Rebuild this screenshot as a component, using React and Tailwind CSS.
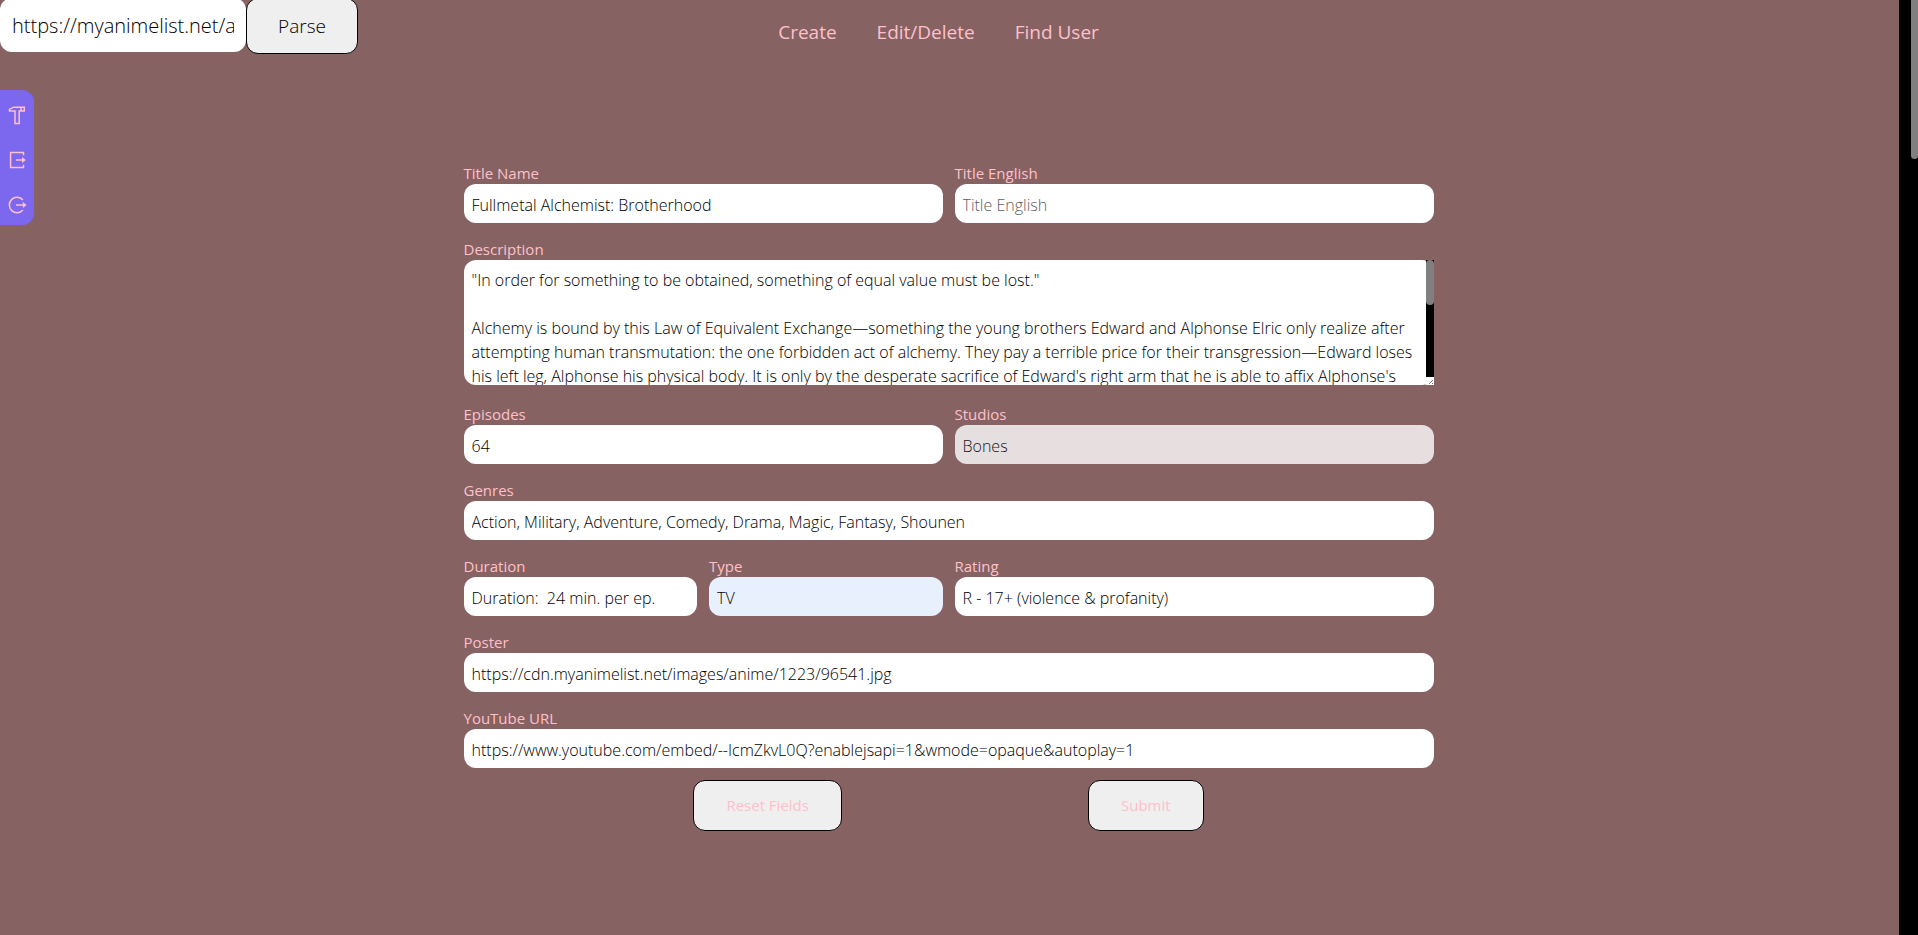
import React from "react";

const DESCRIPTION = `"In order for something to be obtained, something of equal value must be lost."

Alchemy is bound by this Law of Equivalent Exchange—something the young brothers Edward and Alphonse Elric only realize after attempting human transmutation: the one forbidden act of alchemy. They pay a terrible price for their transgression—Edward loses his left leg, Alphonse his physical body. It is only by the desperate sacrifice of Edward's right arm that he is able to affix Alphonse's soul to a suit of armor. Devastated and alone, it is the hope that they would both eventually return to their original bodies that gives Edward the inspiration to obtain metal limbs called "automail" and become a state alchemist, the Fullmetal Alchemist.

Three years later, the brothers seek the Philosopher's Stone, a mythical relic that allows an alchemist to overcome the Law of Equivalent Exchange. Even with military allies on their side, they find themselves caught up in a nationwide conspiracy that leads them to the true nature of the stone and to the dark history of their country.`;

const LINKS = ["Create", "Edit/Delete", "Find User"];

const FIELD =
  "block w-full rounded-xl px-2 text-base font-light text-black placeholder:text-[#606060] outline-none";

function Icon({ children }) {
  return (
    <svg viewBox="0 0 20 20" className="size-5" fill="none" stroke="currentColor" strokeWidth="1.5" aria-hidden="true">
      {children}
    </svg>
  );
}

function HammerIcon() {
  return (
    <Icon>
      <path d="M2.5 6 V4.4 L6.5 2.2 H17.3 V6 H12.2 V18.4 H8 V6 Z" />
      <path d="M14 2.2 V6" />
    </Icon>
  );
}

function ExportIcon() {
  return (
    <Icon>
      <path d="M16.5 5.2 V2.4 H3.6 V17.6 H16.5 V14.8" />
      <path d="M9 10 H16" />
      <path d="M15 7 L18.8 10 L15 13 Z" fill="currentColor" stroke="none" />
    </Icon>
  );
}

function LogoutIcon() {
  return (
    <Icon>
      <path d="M15.9 5 A7.7 7.7 0 1 0 15.9 15" />
      <path d="M9 10 H17" />
      <path d="M15.8 7 L19.6 10 L15.8 13 Z" fill="currentColor" stroke="none" />
    </Icon>
  );
}

const TOOLS = [
  ["Build", HammerIcon],
  ["Export", ExportIcon],
  ["Log out", LogoutIcon],
];

function Field({ id, label, span, tone = "bg-white", ...rest }) {
  return (
    <div className={span}>
      <label htmlFor={id} className="block pt-[2px] leading-[22px]">{label}</label>
      <input id={id} type="text" className={`${FIELD} ${tone} h-[39px] pt-[3px]`} {...rest} />
    </div>
  );
}

export default function App() {
  return (
    <div className="flex min-h-screen bg-black font-['Open_Sans',sans-serif] text-[15px] text-[#ffc0cb]">
      <div className="min-w-0 flex-1 bg-[#866262]">
        <header className="grid h-[54px] grid-cols-[1fr_auto_1fr] items-start overflow-hidden pr-[22px] text-[19px]">
          <form className="flex items-start font-light" onSubmit={(e) => e.preventDefault()}>
            <input
              type="text"
              aria-label="Page address"
              defaultValue="https://myanimelist.net/a"
              className="-mt-[2px] h-[54px] w-[246px] rounded-xl bg-white px-3 text-xl text-black outline-none"
            />
            <button type="submit" className="-mt-[2px] h-14 w-[112px] rounded-xl border border-black bg-[#efefef] text-black">
              Parse
            </button>
          </form>
          <nav className="flex gap-10 pt-[18px] leading-7">
            {LINKS.map((text) => (
              <a key={text} href="#">{text}</a>
            ))}
          </nav>
        </header>

        <div className="grid grid-cols-[34px_1fr_36px] items-start">
          <aside className="mt-9 flex flex-col rounded-r-xl bg-[#7b68ee]">
            {TOOLS.map(([name, Glyph]) => (
              <button key={name} type="button" aria-label={name} className="flex h-[45px] items-center justify-center pt-1">
                <Glyph />
              </button>
            ))}
          </aside>

          <main className="mx-auto w-full max-w-[970px] pt-[106px] pb-8">
            <form onSubmit={(e) => e.preventDefault()}>
              <div className="grid grid-cols-4 gap-x-3 gap-y-[13px]">
                <Field id="name" label="Title Name" span="col-span-2" defaultValue="Fullmetal Alchemist: Brotherhood" />
                <Field id="english" label="Title English" span="col-span-2" placeholder="Title English" />
                <div className="col-span-4 pb-[3px]">
                  <label htmlFor="description" className="block pt-[2px] leading-[22px]">Description</label>
                  <div className="relative">
                    <textarea
                      id="description"
                      defaultValue={DESCRIPTION}
                      className={`${FIELD} h-[125px] resize-none overflow-y-scroll bg-white pt-2 pr-4 leading-6 [scrollbar-width:none]`}
                    />
                    <div className="absolute inset-y-0 right-0 flex w-2 flex-col bg-black" aria-hidden="true">
                      <div className="h-[45px] rounded bg-[#808080]" />
                      <svg viewBox="0 0 8 8" className="mt-auto size-2 bg-white" stroke="#808080" fill="none">
                        <path d="M3 7 L7 3 M6 7 L7 6" />
                      </svg>
                    </div>
                  </div>
                </div>
                <Field id="episodes" label="Episodes" span="col-span-2" defaultValue="64" />
                <Field id="studios" label="Studios" span="col-span-2" tone="bg-white opacity-80" defaultValue="Bones" />
                <Field id="genres" label="Genres" span="col-span-4" defaultValue="Action, Military, Adventure, Comedy, Drama, Magic, Fantasy, Shounen" />
                <Field id="duration" label="Duration" span="col-span-1" defaultValue="Duration:  24 min. per ep." />
                <Field id="type" label="Type" span="col-span-1" tone="bg-[#e8f0fe]" defaultValue="TV" />
                <Field id="rating" label="Rating" span="col-span-2" defaultValue="R - 17+ (violence & profanity)" />
                <Field id="poster" label="Poster" span="col-span-4" defaultValue="https://cdn.myanimelist.net/images/anime/1223/96541.jpg" />
                <Field id="youtube" label="YouTube URL" span="col-span-4" defaultValue="https://www.youtube.com/embed/--IcmZkvL0Q?enablejsapi=1&wmode=opaque&autoplay=1" />
              </div>
              <div className="mt-3 flex justify-evenly">
                <button type="reset" className="mx-4 h-[51px] w-[149px] rounded-xl border border-black bg-[#efefef]">
                  Reset Fields
                </button>
                <button type="submit" className="mx-4 h-[51px] w-[116px] rounded-xl border border-black bg-[#efefef]">
                  Submit
                </button>
              </div>
            </form>
          </main>
        </div>
      </div>
      <div className="flex w-[19px] justify-end" aria-hidden="true">
        <div className="h-[159px] w-[7px] rounded-b bg-[#808080]" />
      </div>
    </div>
  );
}
